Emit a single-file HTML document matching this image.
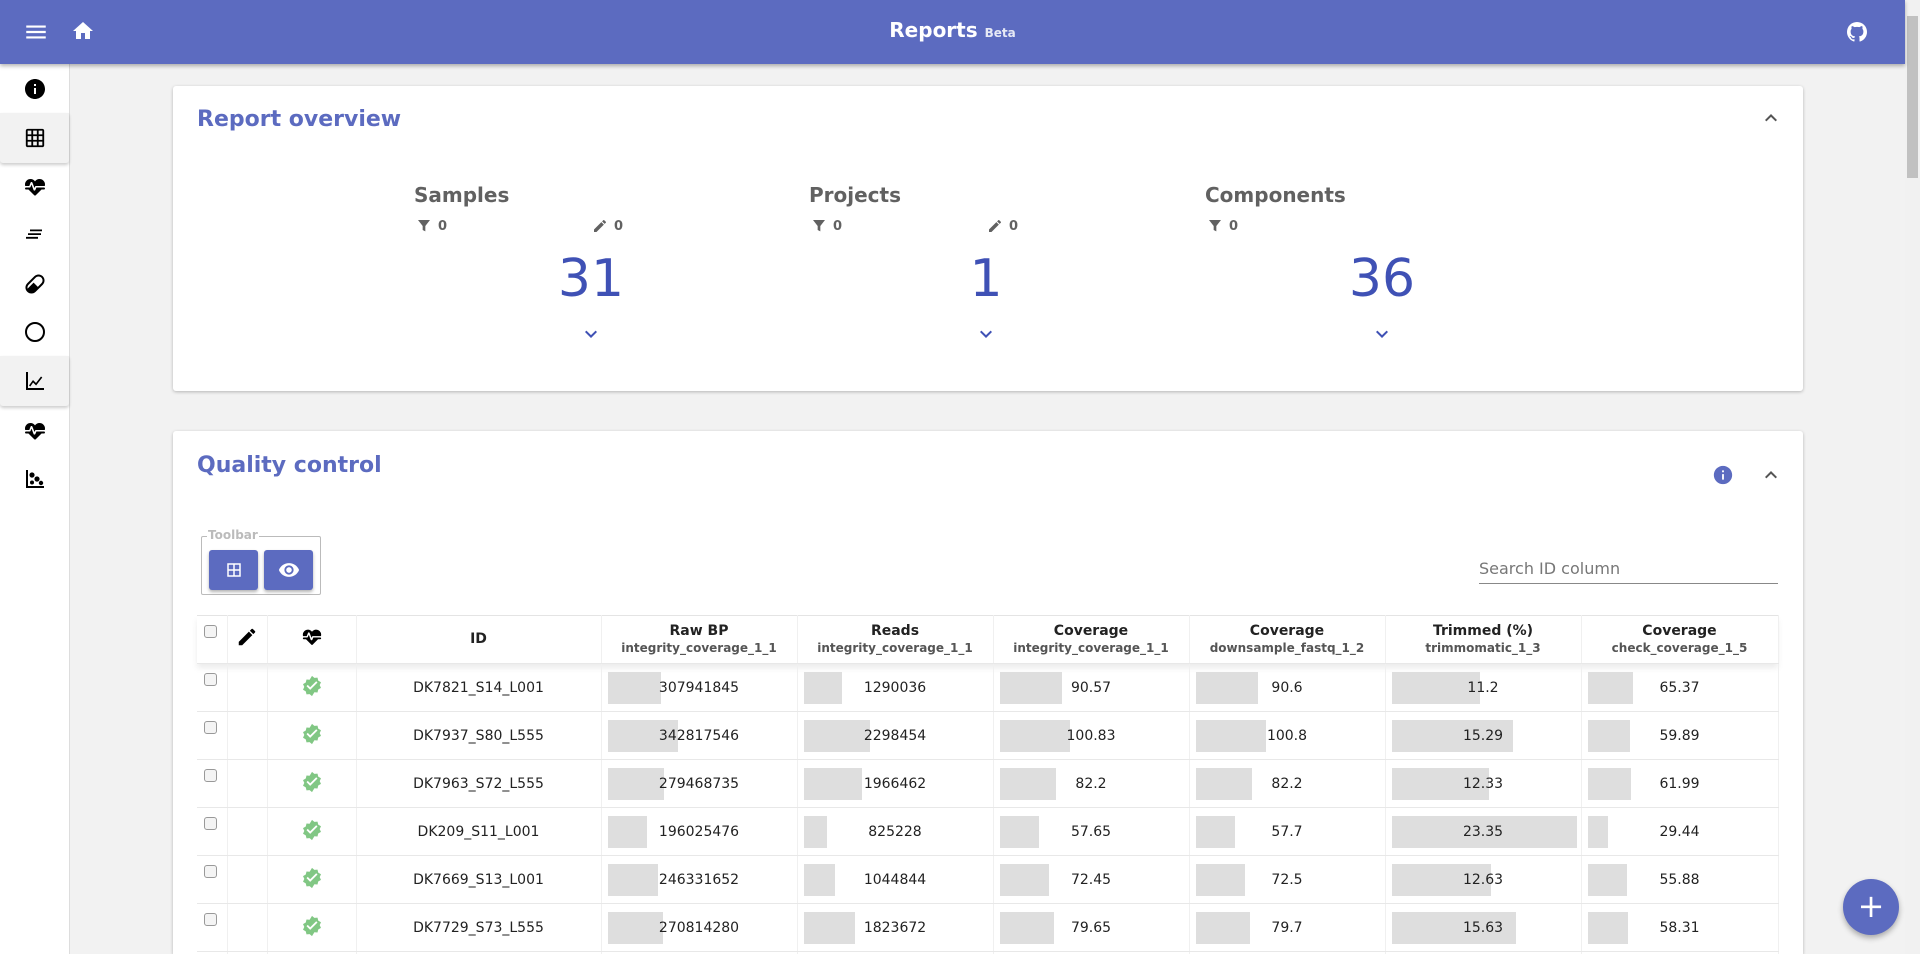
<!DOCTYPE html>
<html style="overflow:hidden;height:954px"><head><meta charset="utf-8"><style>
*{box-sizing:border-box;margin:0;padding:0}
body{width:1920px;height:954px;overflow:hidden;background:#f2f2f2;font-family:"DejaVu Sans","Liberation Sans",sans-serif;position:relative;color:#222}
.abs{position:absolute}
.bar{position:absolute;left:0;top:0;width:1905px;height:64px;background:#5c6bc0;box-shadow:0 2px 4px rgba(0,0,0,.3);z-index:5}
.side{position:absolute;left:0;top:64px;width:70px;height:890px;background:#fff;border-right:1px solid #ddd}
.si{position:absolute;left:0;width:69px;height:50px;display:flex;align-items:center;justify-content:center}
.si.hl{background:#f2f2f2;box-shadow:0 2px 3px rgba(0,0,0,.2);border-radius:0 0 3px 3px}
.card{position:absolute;left:173px;width:1630px;background:#fff;border-radius:3px;box-shadow:0 1px 3px rgba(0,0,0,.25)}
.h{position:absolute;left:24px;font-size:22px;font-weight:bold;color:#5c6bc0}
.ov{position:absolute;width:395px}
.ov .t{position:absolute;left:0;top:-13px;font-size:20px;font-weight:bold;color:#616161}
.ov .f{position:absolute;top:-8px;font-size:13px;font-weight:bold;color:#616161;display:flex;align-items:center;gap:6px}
.ov .n{position:absolute;left:77px;width:200px;text-align:center;top:53px;font-size:52px;color:#3f51b5}
table{border-collapse:collapse;position:absolute;left:197px;top:615px;width:1581px;table-layout:fixed;background:#fff}
td,th{text-align:center;font-size:14px;border-right:1px solid #f0f0f0;border-bottom:1px solid #e8e8e8;position:relative;height:48px;color:#222}
th{font-weight:bold;vertical-align:middle;line-height:17px}
th small{display:block;font-size:12px;color:#555;font-weight:bold}
tr.hd{box-shadow:0 4px 6px rgba(0,0,0,.08)}
td .b{position:absolute;left:6px;top:8px;height:32px;background:#dedede}
td span{position:relative}
.cb{display:inline-block;width:13px;height:13px;border:1px solid #999;border-radius:3px;background:#f4f4f4;position:absolute;left:7px;top:9px}
</style></head><body>
<div class="bar">
<svg class="abs" style="left:23px;top:19px" width="26" height="26" viewBox="0 0 24 24"><path fill="#fff" d="M3 18h18v-2H3v2zm0-5h18v-2H3v2zm0-7v2h18V6H3z"/></svg>
<svg class="abs" style="left:71px;top:19px" width="24" height="24" viewBox="0 0 24 24"><path fill="#fff" d="M10 20v-6h4v6h5v-8h3L12 3 2 12h3v8z"/></svg>
<div class="abs" style="left:0;width:1905px;top:18px;text-align:center;color:#fff;font-size:20px;font-weight:bold">Reports <span style="font-size:12px;font-weight:bold;opacity:.85">Beta</span></div>
<svg class="abs" style="left:1845px;top:20px" width="24" height="24" viewBox="0 0 24 24"><path fill="#fff" d="M12 2A10 10 0 0 0 2 12c0 4.42 2.87 8.17 6.84 9.5.5.08.66-.23.66-.5v-1.69c-2.77.6-3.36-1.34-3.36-1.34-.46-1.16-1.11-1.47-1.11-1.47-.91-.62.07-.6.07-.6 1 .07 1.53 1.03 1.53 1.03.87 1.52 2.34 1.07 2.91.83.09-.65.35-1.09.63-1.34-2.22-.25-4.55-1.11-4.55-4.92 0-1.11.38-2 1.03-2.71-.1-.25-.45-1.29.1-2.64 0 0 .84-.27 2.75 1.02.79-.22 1.65-.33 2.5-.33.85 0 1.71.11 2.5.33 1.91-1.29 2.75-1.02 2.75-1.02.55 1.35.2 2.39.1 2.64.65.71 1.03 1.6 1.03 2.71 0 3.82-2.34 4.66-4.57 4.91.36.31.69.92.69 1.85V21c0 .27.16.59.67.5C19.14 20.16 22 16.42 22 12A10 10 0 0 0 12 2z"/></svg>
</div>
<div class="abs" style="left:1905px;top:0;width:15px;height:954px;background:#f1f1f1"></div>
<div class="abs" style="left:1907px;top:16px;width:11px;height:162px;background:#c1c1c1"></div>

<div class="side">
<div class="si" style="top:0"><svg width="24" height="24" viewBox="0 0 24 24"><path d="M12 2C6.48 2 2 6.48 2 12s4.48 10 10 10 10-4.48 10-10S17.52 2 12 2zm1 15h-2v-6h2v6zm0-8h-2V7h2v2z"/></svg></div>
<div class="si hl" style="top:49px"><svg width="22" height="22" viewBox="0 0 24 24"><path d="M20 2H4c-1.1 0-2 .9-2 2v16c0 1.1.9 2 2 2h16c1.1 0 2-.9 2-2V4c0-1.1-.9-2-2-2zM8 20H4v-4h4v4zm0-6H4v-4h4v4zm0-6H4V4h4v4zm6 12h-4v-4h4v4zm0-6h-4v-4h4v4zm0-6h-4V4h4v4zm6 12h-4v-4h4v4zm0-6h-4v-4h4v4zm0-6h-4V4h4v4z"/></svg></div>
<div class="si" style="top:98px"><svg width="24" height="24" viewBox="0 0 24 24"><path d="M7.5,4A5.5,5.5 0 0,0 2,9.5C2,10 2.09,10.5 2.22,11H6.3L7.57,7.63C7.87,6.83 9.05,6.75 9.43,7.63L11.5,13L12.09,11.58C12.22,11.25 12.57,11 13,11H21.78C21.91,10.5 22,10 22,9.5A5.5,5.5 0 0,0 16.5,4C14.64,4 13,4.93 12,6.34C11,4.93 9.36,4 7.5,4M3,12.5A1,1 0 0,0 2,13.5A1,1 0 0,0 3,14.5H5.44L11,20C12,20.9 12,20.9 13,20L18.56,14.5H21A1,1 0 0,0 22,13.5A1,1 0 0,0 21,12.5H13.4L12.47,14.8C12.07,15.81 10.86,15.91 10.5,14.83L8.5,9.5L7.54,11.83C7.39,12.21 7.05,12.5 6.5,12.5H3Z"/></svg></div>
<div class="si" style="top:146px"><svg width="24" height="24" viewBox="0 0 24 24"><path d="M7 6.5h12v1.8H7zM5 10.2h13V12H5zM3 13.9h12v1.8H3z"/></svg></div>
<div class="si" style="top:195px"><svg width="24" height="24" viewBox="0 0 24 24"><path d="M4.22,11.29L11.29,4.22C13.64,1.88 17.43,1.88 19.78,4.22C22.12,6.56 22.12,10.36 19.78,12.71L12.71,19.78C10.36,22.12 6.56,22.12 4.22,19.78C1.88,17.43 1.88,13.64 4.22,11.29M5.64,12.71C4.59,13.75 4.24,15.24 4.6,16.57L10.59,10.59L14.83,14.83L18.36,11.29C19.93,9.73 19.93,7.2 18.36,5.64C16.8,4.07 14.27,4.07 12.71,5.64L5.64,12.71Z"/></svg></div>
<div class="si" style="top:243px"><svg width="24" height="24" viewBox="0 0 24 24"><circle cx="12" cy="12" r="9" fill="none" stroke="#000" stroke-width="2"/></svg></div>
<div class="si hl" style="top:292px"><svg width="24" height="24" viewBox="0 0 24 24"><path d="M3 3h2v16h16v2H3z M6 16.5l4-5.5 3 3 5-6.5 1.3 1-6.2 8-3-3-2.8 4z"/></svg></div>
<div class="si" style="top:342px"><svg width="24" height="24" viewBox="0 0 24 24"><path d="M7.5,4A5.5,5.5 0 0,0 2,9.5C2,10 2.09,10.5 2.22,11H6.3L7.57,7.63C7.87,6.83 9.05,6.75 9.43,7.63L11.5,13L12.09,11.58C12.22,11.25 12.57,11 13,11H21.78C21.91,10.5 22,10 22,9.5A5.5,5.5 0 0,0 16.5,4C14.64,4 13,4.93 12,6.34C11,4.93 9.36,4 7.5,4M3,12.5A1,1 0 0,0 2,13.5A1,1 0 0,0 3,14.5H5.44L11,20C12,20.9 12,20.9 13,20L18.56,14.5H21A1,1 0 0,0 22,13.5A1,1 0 0,0 21,12.5H13.4L12.47,14.8C12.07,15.81 10.86,15.91 10.5,14.83L8.5,9.5L7.54,11.83C7.39,12.21 7.05,12.5 6.5,12.5H3Z"/></svg></div>
<div class="si" style="top:390px"><svg width="24" height="24" viewBox="0 0 24 24"><path d="M3 3h2v16h16v2H3z"/><circle cx="9" cy="8" r="2.6"/><circle cx="14" cy="12" r="2.6"/><circle cx="9" cy="15.5" r="2"/><circle cx="18" cy="16" r="2.2"/></svg></div>
</div>

<div class="card" style="top:86px;height:305px">
<div class="h" style="top:21px">Report overview</div>
<svg class="abs" style="left:1586px;top:20px" width="24" height="24" viewBox="0 0 24 24"><path fill="#555" d="M7.41 15.41L12 10.83l4.59 4.58L18 14l-6-6-6 6z"/></svg>
<div class="ov" style="left:241px;top:110px">
<div class="t">Samples</div>
<div class="f" style="left:2px;top:22px"><svg width="16" height="16" viewBox="0 0 24 24"><path fill="#616161" d="M3 3h18l-7 9v8l-4-2v-6z"/></svg>0</div>
<div class="f" style="left:178px;top:22px"><svg width="16" height="16" viewBox="0 0 24 24"><path fill="#616161" d="M3 17.25V21h3.75L17.81 9.94l-3.75-3.75L3 17.25zM20.71 7.04c.39-.39.39-1.02 0-1.41l-2.34-2.34c-.39-.39-1.02-.39-1.41 0l-1.83 1.83 3.75 3.75 1.83-1.83z"/></svg>0</div>
<div class="n">31</div>
<svg class="abs" style="left:165px;top:126px" width="24" height="24" viewBox="0 0 24 24"><path fill="#3f51b5" d="M7.41 8.59L12 13.17l4.59-4.58L18 10l-6 6-6-6z"/></svg>
</div>
<div class="ov" style="left:636px;top:110px">
<div class="t">Projects</div>
<div class="f" style="left:2px;top:22px"><svg width="16" height="16" viewBox="0 0 24 24"><path fill="#616161" d="M3 3h18l-7 9v8l-4-2v-6z"/></svg>0</div>
<div class="f" style="left:178px;top:22px"><svg width="16" height="16" viewBox="0 0 24 24"><path fill="#616161" d="M3 17.25V21h3.75L17.81 9.94l-3.75-3.75L3 17.25zM20.71 7.04c.39-.39.39-1.02 0-1.41l-2.34-2.34c-.39-.39-1.02-.39-1.41 0l-1.83 1.83 3.75 3.75 1.83-1.83z"/></svg>0</div>
<div class="n">1</div>
<svg class="abs" style="left:165px;top:126px" width="24" height="24" viewBox="0 0 24 24"><path fill="#3f51b5" d="M7.41 8.59L12 13.17l4.59-4.58L18 10l-6 6-6-6z"/></svg>
</div>
<div class="ov" style="left:1032px;top:110px">
<div class="t">Components</div>
<div class="f" style="left:2px;top:22px"><svg width="16" height="16" viewBox="0 0 24 24"><path fill="#616161" d="M3 3h18l-7 9v8l-4-2v-6z"/></svg>0</div>
<div class="n">36</div>
<svg class="abs" style="left:165px;top:126px" width="24" height="24" viewBox="0 0 24 24"><path fill="#3f51b5" d="M7.41 8.59L12 13.17l4.59-4.58L18 10l-6 6-6-6z"/></svg>
</div>
</div>

<div class="card" style="top:431px;height:523px;border-radius:3px 3px 0 0">
<div class="h" style="top:22px">Quality control</div>
<svg class="abs" style="left:1539px;top:33px" width="22" height="22" viewBox="0 0 24 24"><path fill="#5c6bc0" d="M12 2C6.48 2 2 6.48 2 12s4.48 10 10 10 10-4.48 10-10S17.52 2 12 2zm1 15h-2v-6h2v6zm0-8h-2V7h2v2z"/></svg>
<svg class="abs" style="left:1586px;top:32px" width="24" height="24" viewBox="0 0 24 24"><path fill="#555" d="M7.41 15.41L12 10.83l4.59 4.58L18 14l-6-6-6 6z"/></svg>
<div class="abs" style="left:28px;top:105px;width:120px;height:59px;border:1px solid #bbb;border-radius:2px"></div>
<div class="abs" style="left:34px;top:97px;background:#fff;padding:0 1px;font-size:12px;font-weight:bold;color:#bbb">Toolbar</div>
<div class="abs" style="left:36px;top:119px;width:49px;height:40px;background:#5c6bc0;border-radius:3px;box-shadow:0 2px 3px rgba(0,0,0,.3);display:flex;align-items:center;justify-content:center"><svg width="18" height="18" viewBox="0 0 24 24"><path fill="#fff" fill-rule="evenodd" d="M3 3h18v18H3z M5 5v6h6V5z M13 5v6h6V5z M5 13v6h6v-6z M13 13v6h6v-6z"/></svg></div>
<div class="abs" style="left:91px;top:119px;width:49px;height:40px;background:#5c6bc0;border-radius:3px;box-shadow:0 2px 3px rgba(0,0,0,.3);display:flex;align-items:center;justify-content:center"><svg width="22" height="22" viewBox="0 0 24 24"><path fill="#fff" d="M12 4.5C7 4.5 2.73 7.61 1 12c1.73 4.39 6 7.5 11 7.5s9.27-3.11 11-7.5c-1.73-4.39-6-7.5-11-7.5zM12 17c-2.76 0-5-2.24-5-5s2.24-5 5-5 5 2.24 5 5-2.24 5-5 5zm0-8c-1.66 0-3 1.34-3 3s1.34 3 3 3 3-1.34 3-3-1.34-3-3-3z"/></svg></div>
<div class="abs" style="left:1306px;top:128px;font-size:16px;color:#777">Search ID column</div>
<div class="abs" style="left:1306px;top:152px;width:299px;height:1px;background:#888"></div>
</div>

<table>
<colgroup><col style="width:30px"><col style="width:40px"><col style="width:89px"><col style="width:245px"><col style="width:196px"><col style="width:196px"><col style="width:196px"><col style="width:196px"><col style="width:196px"><col style="width:197px"></colgroup>
<tr class="hd" style="border-top:1px solid #e4e4e4"><th><span class="cb"></span></th>
<th><svg width="22" height="22" viewBox="0 0 24 24"><path d="M3 17.25V21h3.75L17.81 9.94l-3.75-3.75L3 17.25zM20.71 7.04c.39-.39.39-1.02 0-1.41l-2.34-2.34c-.39-.39-1.02-.39-1.41 0l-1.83 1.83 3.75 3.75 1.83-1.83z"/></svg></th>
<th><svg width="22" height="22" viewBox="0 0 24 24"><path d="M7.5,4A5.5,5.5 0 0,0 2,9.5C2,10 2.09,10.5 2.22,11H6.3L7.57,7.63C7.87,6.83 9.05,6.75 9.43,7.63L11.5,13L12.09,11.58C12.22,11.25 12.57,11 13,11H21.78C21.91,10.5 22,10 22,9.5A5.5,5.5 0 0,0 16.5,4C14.64,4 13,4.93 12,6.34C11,4.93 9.36,4 7.5,4M3,12.5A1,1 0 0,0 2,13.5A1,1 0 0,0 3,14.5H5.44L11,20C12,20.9 12,20.9 13,20L18.56,14.5H21A1,1 0 0,0 22,13.5A1,1 0 0,0 21,12.5H13.4L12.47,14.8C12.07,15.81 10.86,15.91 10.5,14.83L8.5,9.5L7.54,11.83C7.39,12.21 7.05,12.5 6.5,12.5H3Z"/></svg></th>
<th>ID</th>
<th>Raw BP<small>integrity_coverage_1_1</small></th>
<th>Reads<small>integrity_coverage_1_1</small></th>
<th>Coverage<small>integrity_coverage_1_1</small></th>
<th>Coverage<small>downsample_fastq_1_2</small></th>
<th>Trimmed (%)<small>trimmomatic_1_3</small></th>
<th>Coverage<small>check_coverage_1_5</small></th></tr>
<tbody id="tb"></tbody>
</table>
<script>
var rows=[["DK7821_S14_L001","307941845",53,"1290036",38,"90.57",62,"90.6",62,"11.2",88,"65.37",45],
["DK7937_S80_L555","342817546",70,"2298454",66,"100.83",70,"100.8",70,"15.29",121,"59.89",42],
["DK7963_S72_L555","279468735",56,"1966462",58,"82.2",56,"82.2",56,"12.33",97,"61.99",43],
["DK209_S11_L001","196025476",39,"825228",23,"57.65",39,"57.7",39,"23.35",185,"29.44",20],
["DK7669_S13_L001","246331652",50,"1044844",31,"72.45",49,"72.5",49,"12.63",99,"55.88",39],
["DK7729_S73_L555","270814280",55,"1823672",51,"79.65",54,"79.7",54,"15.63",124,"58.31",40]];
var chk='<svg width="22" height="22" viewBox="0 0 24 24"><path fill="#81c784" d="M12 1l2.6 2.2 3.4-.3.8 3.3 3 1.7-1.4 3.1 1.4 3.1-3 1.7-.8 3.3-3.4-.3L12 23l-2.6-2.2-3.4.3-.8-3.3-3-1.7L3.6 13 2.2 9.9l3-1.7.8-3.3 3.4.3z"/><path fill="#fff" d="M10 16.2l-4-4 1.4-1.4 2.6 2.6 6.6-6.6L18 8.2z"/></svg>';
var h='';rows.forEach(function(r){h+='<tr><td><span class="cb"></span></td><td></td><td>'+chk+'</td><td>'+r[0]+'</td>';for(var i=1;i<13;i+=2){h+='<td><div class="b" style="width:'+r[i+1]+'px"></div><span>'+r[i]+'</span></td>';}h+='</tr>';});
h+='<tr><td style="height:10px"></td><td></td><td></td><td></td><td></td><td></td><td></td><td></td><td></td><td></td></tr>';
document.getElementById('tb').innerHTML=h;
</script>
<div class="abs" style="left:1843px;top:879px;width:56px;height:56px;border-radius:50%;background:#5c6bc0;box-shadow:0 3px 6px rgba(0,0,0,.3);color:#fff;font-size:32px;line-height:54px;text-align:center">+</div>
</body></html>
